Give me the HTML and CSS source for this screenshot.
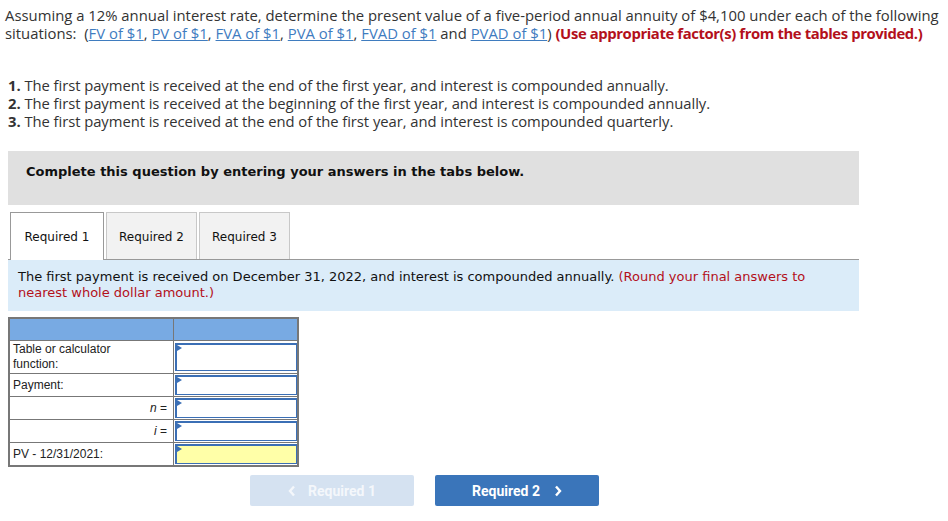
FILE: index.html
```html
<!DOCTYPE html>
<html lang="en">
<head>
  <meta charset="UTF-8">
  <title>Present value of annuity</title>
  <link rel="stylesheet" href="styles.css">
</head>
<body>

  <div class="Pergunta">
    <p class="PerguntaTexto">
      Assuming a 12% annual interest rate, determine the present value of a five-period annual annuity of $4,100 under each of the following situations:&nbsp; (<a href="#">FV of $1</a>, <a href="#">PV of $1</a>, <a href="#">FVA of $1</a>, <a href="#">PVA of $1</a>, <a href="#">FVAD of $1</a> and <a href="#">PVAD of $1</a>) <b class="Aviso">(Use appropriate factor(s) from the tables provided.)</b>
    </p>

    <ol class="PerguntaLista">
      <li><b>1.</b> The first payment is received at the end of the first year, and interest is compounded annually.</li>
      <li><b>2.</b> The first payment is received at the beginning of the first year, and interest is compounded annually.</li>
      <li><b>3.</b> The first payment is received at the end of the first year, and interest is compounded quarterly.</li>
    </ol>
  </div>

  <div class="Instrucao">Complete this question by entering your answers in the tabs below.</div>

  <div class="Abas">
    <div class="Aba Aba-ativa">Required 1</div>
    <div class="Aba">Required 2</div>
    <div class="Aba">Required 3</div>
  </div>

  <div class="AbaEnunciado">
    The first payment is received on December 31, 2022, and interest is compounded annually. <span class="Aviso2">(Round your final answers to nearest whole dollar amount.)</span>
  </div>

  <table class="Tabela">
    <tr class="TabelaCabecalho">
      <th class="ColRotulo"></th>
      <th class="ColValor"></th>
    </tr>
    <tr class="LinhaAlta">
      <td>Table or calculator<br>function:</td>
      <td class="Campo"><div class="Entrada"></div></td>
    </tr>
    <tr>
      <td>Payment:</td>
      <td class="Campo"><div class="Entrada"></div></td>
    </tr>
    <tr>
      <td class="Direita"><i>n</i> =</td>
      <td class="Campo"><div class="Entrada"></div></td>
    </tr>
    <tr>
      <td class="Direita"><i>i</i> =</td>
      <td class="Campo"><div class="Entrada"></div></td>
    </tr>
    <tr>
      <td>PV - 12/31/2021:</td>
      <td class="Campo"><div class="Entrada Entrada-amarela"></div></td>
    </tr>
  </table>

  <div class="Navegacao">
    <button class="Botao Botao-desligado">
      <svg class="Seta" width="8" height="12" viewBox="0 0 8 12"><polyline points="6,1.5 2,6 6,10.5" fill="none" stroke="currentColor" stroke-width="2.4"/></svg>
      Required 1
    </button>
    <button class="Botao Botao-ativo">
      Required 2
      <svg class="Seta" width="8" height="12" viewBox="0 0 8 12"><polyline points="2,1.5 6,6 2,10.5" fill="none" stroke="currentColor" stroke-width="2.4"/></svg>
    </button>
  </div>

</body>
</html>
```

FILE: styles.css
```css
body {
  margin: 0;
  padding: 0 8px;
  color: #333;
  font-family: "Open Sans", "Liberation Sans", sans-serif;
  background: #fff;
}
.PerguntaTexto {
  margin: 0;
  padding: 6px 0 0 0;
  margin-left: -3px;
  font-size: 14.85px;
  line-height: 18px;
  width: 945px;
}
.PerguntaTexto a {
  color: #3f7cbf;
  text-decoration: underline;
}
.Aviso {
  color: #b3101b;
  letter-spacing: -0.4px;
}
.PerguntaLista {
  list-style: none;
  margin: 34px 0 0 0;
  padding: 0;
  font-size: 14.8px;
  line-height: 18px;
  letter-spacing: -0.05px;
}
.Instrucao {
  margin-top: 21px;
  height: 54px;
  width: 851px;
  box-sizing: border-box;
  background: #e0e0e0;
  padding: 13px 18px;
  font-family: "DejaVu Sans", sans-serif;
  font-weight: bold;
  font-size: 13px;
  color: #111;
}
.Abas {
  display: flex;
  gap: 2px;
  margin-top: 7px;
  padding-left: 2px;
  width: 849px;
  border-bottom: 1px solid #999;
  height: 47px;
}
.Aba {
  width: 91px;
  height: 47px;
  box-sizing: border-box;
  border: 1px solid #c8c8c8;
  border-bottom: none;
  background: #f2f2f2;
  font-family: "DejaVu Sans", sans-serif;
  font-size: 12px;
  color: #111;
  text-align: center;
  line-height: 48px;
}
.Aba-ativa {
  width: 94px;
  background: #fff;
  border-color: #999;
  height: 48px;
}
.AbaEnunciado {
  width: 851px;
  box-sizing: border-box;
  background: #dbecf9;
  padding: 9px 10px 9px 10px;
  height: 51px;
  font-family: "DejaVu Sans", sans-serif;
  font-size: 13px;
  line-height: 16px;
  color: #111;
}
.Aviso2 {
  color: #b3101b;
}
.Tabela {
  margin-top: 6px;
  border-collapse: collapse;
  border: 2px solid #777;
  font-family: "Liberation Sans", Arial, sans-serif;
  font-size: 12px;
  color: #222;
}
.Tabela th, .Tabela td {
  border: 1px solid #777;
  padding: 0;
}
.TabelaCabecalho th {
  background: #78aae3;
  height: 21px;
}
.ColRotulo {
  width: 163px;
}
.ColValor {
  width: 123px;
}
.Tabela td {
  padding: 1px 3px;
  height: 20px;
  line-height: 15px;
}
.LinhaAlta td {
  height: 28px;
}
.Tabela td.Direita {
  text-align: right;
  padding-right: 6px;
}
.Tabela td.Campo {
  padding: 1px 0 1px 1px;
}
.Entrada {
  position: relative;
  height: 100%;
  min-height: 19px;
  box-sizing: border-box;
  border: 1px solid #3b6fb5;
  border-left-width: 2px;
  border-top-width: 2px;
  background: #fff;
}
.LinhaAlta .Entrada {
  height: 28px;
}
.Entrada::before {
  content: "";
  position: absolute;
  left: 0;
  top: 0;
  border-top: 3px solid transparent;
  border-bottom: 3px solid transparent;
  border-left: 5px solid #3b6fb5;
}
.Entrada-amarela {
  background: #ffffa8;
}
.Navegacao {
  display: flex;
  gap: 21px;
  margin-top: 8px;
  padding-left: 242px;
}
.Botao {
  width: 164px;
  height: 31px;
  border: none;
  border-radius: 2px;
  font-family: Roboto, "Liberation Sans", sans-serif;
  font-weight: bold;
  font-size: 14px;
  color: #fff;
  display: flex;
  align-items: center;
  justify-content: center;
  gap: 12px;
}
.Botao-desligado {
  background: #d5e2f1;
  color: #f4f7fb;
}
.Botao-ativo {
  background: #3a75ba;
  gap: 14px;
}
```
